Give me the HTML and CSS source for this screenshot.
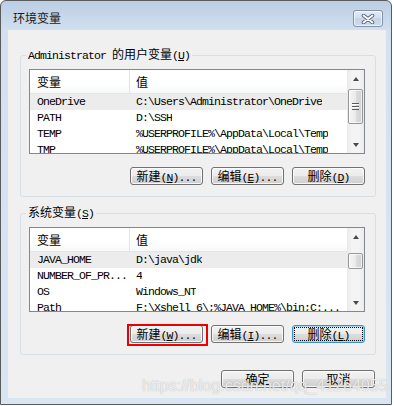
FILE: index.html
```html
<!DOCTYPE html>
<html>
<head>
    <title>环境变量</title>
    <link rel="stylesheet" href="styles.css">
</head>
<body>
    <div class="window">
        <div class="titlebar">
            <span class="title">环境变量</span>
            <button class="close">
                <svg width="14" height="10" viewBox="0 0 14 10">
                    <path d="M2.5 1.5 L11.5 8.5 M11.5 1.5 L2.5 8.5" stroke="#55627a" stroke-width="3.6" stroke-linecap="round"/>
                    <path d="M2.5 1.5 L11.5 8.5 M11.5 1.5 L2.5 8.5" stroke="#fff" stroke-width="1.8" stroke-linecap="round"/>
                </svg>
            </button>
        </div>
        <div class="client">
            <fieldset class="group">
                <legend>Administrator <span class="zh">的用户变量</span>(<u>U</u>)</legend>
                <div class="list">
                    <div class="list-body">
                        <div class="list-head"><span class="col-name">变量</span><span class="col-value">值</span></div>
                        <div class="row selected"><span class="col-name">OneDrive</span><span class="col-value">C:\Users\Administrator\OneDrive</span></div>
                        <div class="row"><span class="col-name">PATH</span><span class="col-value">D:\SSH</span></div>
                        <div class="row"><span class="col-name">TEMP</span><span class="col-value">%USERPROFILE%\AppData\Local\Temp</span></div>
                        <div class="row"><span class="col-name">TMP</span><span class="col-value">%USERPROFILE%\AppData\Local\Temp</span></div>
                    </div>
                    <div class="scrollbar">
                        <span class="arrow up"></span>
                        <span class="thumb thumb-user"><span class="grip"></span></span>
                        <span class="track"></span>
                        <span class="arrow down"></span>
                    </div>
                </div>
                <div class="buttons">
                    <button class="btn"><span class="zh">新建</span>(<u>N</u>)...</button>
                    <button class="btn"><span class="zh">编辑</span>(<u>E</u>)...</button>
                    <button class="btn"><span class="zh">删除</span>(<u>D</u>)</button>
                </div>
            </fieldset>

            <fieldset class="group group-system">
                <legend><span class="zh">系统变量</span>(<u>S</u>)</legend>
                <div class="list">
                    <div class="list-body">
                        <div class="list-head"><span class="col-name">变量</span><span class="col-value">值</span></div>
                        <div class="row selected"><span class="col-name">JAVA_HOME</span><span class="col-value">D:\java\jdk</span></div>
                        <div class="row"><span class="col-name">NUMBER_OF_PR...</span><span class="col-value">4</span></div>
                        <div class="row"><span class="col-name">OS</span><span class="col-value">Windows_NT</span></div>
                        <div class="row"><span class="col-name">Path</span><span class="col-value">F:\Xshell 6\;%JAVA_HOME%\bin;C:...</span></div>
                    </div>
                    <div class="scrollbar">
                        <span class="arrow up"></span>
                        <span class="thumb thumb-system"></span>
                        <span class="track"></span>
                        <span class="arrow down"></span>
                    </div>
                </div>
                <div class="buttons">
                    <button class="btn marked"><span class="zh">新建</span>(<u>W</u>)...</button>
                    <button class="btn"><span class="zh">编辑</span>(<u>I</u>)...</button>
                    <button class="btn default"><span class="focus"><span class="zh">删除</span>(<u>L</u>)</span></button>
                </div>
            </fieldset>

            <div class="dialog-buttons">
                <button class="btn"><span class="zh">确定</span></button>
                <button class="btn"><span class="zh">取消</span></button>
            </div>

            <div class="watermark">https://blog.csdn.net/qq_41264055</div>
        </div>
    </div>
</body>
</html>
```

FILE: styles.css
```css
body {
    margin: 0;
    background: #fff;
    font-family: "Liberation Mono", "Noto Sans CJK SC", monospace;
    font-size: 11.5px;
    letter-spacing: -0.9px;
    color: #000;
}
.zh {
    font-family: "Noto Sans CJK SC", sans-serif;
    font-size: 12px;
    letter-spacing: 0;
}
.window {
    width: 392px;
    height: 405px;
    box-sizing: border-box;
    border: 1px solid #5b5b5b;
    border-radius: 6px 6px 0 0;
    background: linear-gradient(#bccee4, #d2e0f0 30px, #d8e5f3);
    display: flex;
    flex-direction: column;
    padding: 0 5px 6px 7px;
}
.titlebar {
    height: 29px;
    flex: none;
    display: flex;
    align-items: flex-start;
    justify-content: space-between;
}
.title {
    font-family: "Noto Sans CJK SC", sans-serif;
    font-size: 12px;
    letter-spacing: 0;
    line-height: 16px;
    margin: 9px 0 0 5px;
    color: #1a1a1a;
}
.close {
    width: 30px;
    height: 17px;
    margin: 9px 3px 0 0;
    padding: 0;
    border: 1px solid #8493ab;
    border-radius: 3px;
    background: linear-gradient(#e3ebf5, #d3deec 50%, #c6d4e6 50%, #cfdcec);
    box-shadow: inset 0 0 0 1px rgba(255, 255, 255, 0.6);
    display: flex;
    align-items: center;
    justify-content: center;
}
.client {
    flex: 1;
    position: relative;
    background: #f0f0f0;
    padding: 17px 10px 0 12px;
}
.group {
    margin: 0;
    padding: 6px 10px 11px 8px;
    border: 1px solid #d5dfe5;
    border-radius: 3px;
}
.group-system {
    margin-top: 8px;
}
.group legend {
    padding: 0 2px;
    margin-left: -3px;
    line-height: 14px;
}
.list {
    display: flex;
    height: 85px;
    box-sizing: border-box;
    border: 1px solid #828790;
    background: #fff;
}
.list-body {
    flex: 1;
    overflow: hidden;
}
.list-head {
    display: flex;
    height: 24px;
    box-sizing: border-box;
    border-bottom: 1px solid #e5e5e5;
    background: linear-gradient(#fff, #fff 60%, #f7f8f9);
}
.list-head span {
    font-family: "Noto Sans CJK SC", sans-serif;
    font-size: 12px;
    letter-spacing: 0;
    line-height: 23px;
}
.list-head .col-name {
    border-right: 1px solid #e5e5e5;
}
.col-name {
    width: 100px;
    flex: none;
    box-sizing: border-box;
    padding-left: 7px;
    overflow: hidden;
}
.col-value {
    padding-left: 6px;
    overflow: hidden;
}
.row {
    display: flex;
    height: 16px;
    line-height: 16px;
    white-space: nowrap;
}
.row.selected {
    background: #ececec;
}
.scrollbar {
    width: 17px;
    flex: none;
    display: flex;
    flex-direction: column;
    background: linear-gradient(90deg, #e9e9e9, #f4f4f4 30%, #f4f4f4 70%, #ebebeb);
}
.arrow {
    height: 17px;
    flex: none;
    display: flex;
    align-items: center;
    justify-content: center;
}
.arrow::before {
    content: "";
    border-left: 3.5px solid transparent;
    border-right: 3.5px solid transparent;
}
.arrow.up::before {
    border-bottom: 4px solid #4a4a4a;
}
.arrow.down::before {
    border-top: 4px solid #4a4a4a;
}
.thumb {
    flex: none;
    margin: 0 1px;
    box-sizing: border-box;
    border: 1px solid #979797;
    border-radius: 2px;
    background: linear-gradient(90deg, #f6f6f6, #eaeaea 50%, #dcdcdc 50%, #d2d2d2);
    box-shadow: inset 0 0 0 1px rgba(255, 255, 255, 0.7);
    display: flex;
    align-items: center;
    justify-content: center;
}
.thumb-user {
    margin-top: 2px;
    height: 35px;
}
.thumb-system {
    margin-top: 8px;
    height: 16px;
}
.grip {
    width: 7px;
    height: 7px;
    background: repeating-linear-gradient(#5b5b5b 0, #5b5b5b 1px, #fff 1px, #fff 2px, transparent 2px, transparent 3px);
}
.track {
    flex: 1;
}
.buttons {
    display: flex;
    justify-content: flex-end;
    gap: 8px;
    margin-top: 13px;
}
.btn {
    width: 73px;
    height: 18px;
    box-sizing: border-box;
    padding: 0;
    border: 1px solid #707070;
    border-radius: 3px;
    background: linear-gradient(#f2f2f2, #ebebeb 50%, #dddddd 50%, #cfcfcf);
    box-shadow: inset 0 0 0 1px rgba(255, 255, 255, 0.8);
    font: inherit;
    letter-spacing: inherit;
    color: #000;
    line-height: 16px;
    white-space: nowrap;
}
.btn.default {
    border-color: #3c8fd0;
    box-shadow: inset 0 0 0 1px #9fd9f6;
}
.focus {
    display: block;
    height: 14px;
    box-sizing: border-box;
    margin: 0 1px;
    border: 1px dotted #000;
    line-height: 12px;
}
.marked {
    position: relative;
}
.marked::after {
    content: "";
    position: absolute;
    top: -2px;
    left: -4px;
    right: -6px;
    bottom: -4px;
    border: 2px solid #ee0000;
}
.dialog-buttons {
    display: flex;
    justify-content: flex-end;
    gap: 8px;
    margin: 15px 1px 0 0;
}
.watermark {
    position: absolute;
    left: 134px;
    top: 347px;
    font-family: "Liberation Sans", sans-serif;
    font-size: 16px;
    letter-spacing: 0;
    line-height: 18px;
    color: rgba(255, 255, 255, 0.8);
    text-shadow: 0 0 1px rgba(110, 110, 110, 0.6);
    pointer-events: none;
}
```
